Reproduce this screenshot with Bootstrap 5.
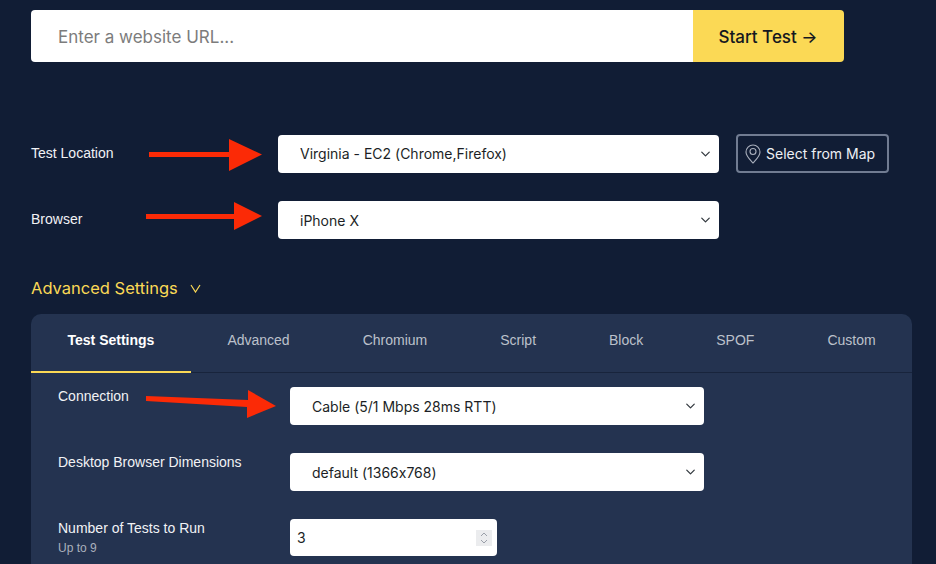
<!DOCTYPE html>
<html lang="en">
<head>
    <meta charset="UTF-8" />
    <title>Start a Test</title>
    <link href="https://cdn.jsdelivr.net/npm/bootstrap@5.3.0/dist/css/bootstrap.min.css" rel="stylesheet" />
    <style>
        html, body { height: 564px; overflow: hidden; }
        body { background: #111d35; font-family: "Liberation Sans", Arial, sans-serif; font-size: 14px; color: #f1f2f5; }
        .test-page { padding: 10px 24px 0 31px; }

        .url-bar { width: 813px; height: 52px; }
        .url-bar .form-control { height: 52px; border: 0; padding: 1px 0 0 27px; font-family: Inter, sans-serif; font-size: 17px; border-radius: 4px 0 0 4px; }
        .url-bar .form-control::placeholder { color: #7c7c7c; }
        .start-btn { width: 151px; padding: 3px 1px 0 0; background: #fbd955; border: 0; border-radius: 0 4px 4px 0; color: #14171f; font-family: Inter, sans-serif; font-size: 17px; font-weight: 500; }
        .start-btn:hover { background: #fbd955; color: #14171f; }

        .form-line { display: flex; align-items: center; }
        .form-line > label { width: 247px; flex: none; }
        /* calt off: Inter otherwise turns the x of 1366x768 into a multiplication sign */
        .pick { height: 38px; width: 441px; padding: 0 30px 0 22px; border: 0; border-radius: 4px; font-family: Inter, sans-serif; font-size: 14px; font-feature-settings: "calt" 0; color: #1c1f26; background-position: right 7px center; background-size: 13px 10px; }
        .location-line { margin-top: 72px; }
        .browser-line { margin-top: 28px; }
        .browser-line > label { padding-bottom: 2px; }

        .map-btn { display: flex; align-items: center; gap: 5px; height: 39px; width: 153px; margin-left: 17px; padding: 0 0 0 7px; border: 2px solid #717c92; border-radius: 4px; background: transparent; color: #eef0f4; font-family: Inter, sans-serif; font-size: 14px; white-space: nowrap; }

        .adv-toggle { display: flex; align-items: center; gap: 12px; margin-top: 37px; color: #fbd955; font-family: Inter, sans-serif; font-size: 16.500px; line-height: 24px; }

        .settings-panel { margin-top: 14px; width: 881px; height: 250px; overflow: hidden; background: #243350; border-radius: 10px 10px 0 0; }
        .panel-tabs { height: 59px; border-bottom: 1px solid #18243c; flex-wrap: nowrap; }
        .panel-tabs .nav-item { flex: none; }
        .panel-tabs .nav-link { height: 59px; padding: 0 36.500px 7px; display: flex; align-items: center; color: #bcc1cb; font-size: 14px; white-space: nowrap; }
        .panel-tabs .nav-link.active { padding-bottom: 5px; color: #fff; font-weight: 700; border-bottom: 2px solid #fbd955; }

        .panel-body { padding: 14px 0 0 27px; }
        .panel-body .form-line { align-items: flex-start; margin-bottom: 28px; }
        .panel-body .form-line > label { width: 232px; line-height: 18px; }
        .panel-body .pick { width: 414px; }
        .hint-text { display: block; margin-top: 2px; font-size: 12px; color: #aab0bc; }
        /* spinner drawn as a background so it keeps the grey box and thin chevrons */
        .runs-input { width: 207px; height: 37px; padding: 0 4px 1px 7px; border: 0; border-radius: 4px; font-family: Inter, sans-serif; font-size: 14px; color: #1c1f26; appearance: textfield;
            background: #fff url("data:image/svg+xml,%3csvg xmlns='http://www.w3.org/2000/svg' width='16' height='16' viewBox='0 0 16 16'%3e%3crect width='16' height='16' fill='%23ebecee'/%3e%3cpath d='M5 6 L8 3 L11 6 M5 10 L8 13 L11 10' fill='none' stroke='%239a9fa9' stroke-width='1'/%3e%3c/svg%3e") no-repeat right 5px center; }
        .runs-input::-webkit-inner-spin-button { display: none; }

        .callouts { position: absolute; left: 0; top: 0; pointer-events: none; }
    </style>
</head>
<body>

<div class="test-page">
    <!-- URL bar -->
    <div class="input-group url-bar">
        <input type="text" class="form-control" placeholder="Enter a website URL..." />
        <button class="btn start-btn" type="button">Start Test →</button>
    </div>

    <!-- Location and browser -->
    <div class="form-line location-line">
        <label>Test Location</label>
        <select class="form-select pick"><option>Virginia - EC2 (Chrome,Firefox)</option></select>
        <button class="map-btn" type="button">
            <svg width="16" height="20" viewBox="0 0 16 20" fill="none" stroke="#aab0bd" stroke-width="1.1">
                <path d="M8 19 C6 16.500 1 12.500 1 8 a7 7 0 0 1 14 0 C15 12.500 10 16.500 8 19 Z" />
                <circle cx="8" cy="7.500" r="3" />
            </svg>
            Select from Map
        </button>
    </div>
    <div class="form-line browser-line">
        <label>Browser</label>
        <select class="form-select pick"><option>iPhone X</option></select>
    </div>

    <!-- Advanced settings -->
    <div class="adv-toggle">
        Advanced Settings
        <svg width="11" height="9" viewBox="0 0 11 9" fill="none" stroke="#fbd955" stroke-width="1.200"><path d="M1 1 L5.500 8 L10 1" /></svg>
    </div>

    <div class="settings-panel">
        <ul class="nav panel-tabs">
            <li class="nav-item"><a class="nav-link active" href="#">Test Settings</a></li>
            <li class="nav-item"><a class="nav-link" href="#">Advanced</a></li>
            <li class="nav-item"><a class="nav-link" href="#">Chromium</a></li>
            <li class="nav-item"><a class="nav-link" href="#">Script</a></li>
            <li class="nav-item"><a class="nav-link" href="#">Block</a></li>
            <li class="nav-item"><a class="nav-link" href="#">SPOF</a></li>
            <li class="nav-item"><a class="nav-link" href="#">Custom</a></li>
        </ul>
        <div class="panel-body">
            <div class="form-line">
                <label>Connection</label>
                <select class="form-select pick"><option>Cable (5/1 Mbps 28ms RTT)</option></select>
            </div>
            <div class="form-line">
                <label>Desktop Browser Dimensions</label>
                <select class="form-select pick"><option>default (1366x768)</option></select>
            </div>
            <div class="form-line">
                <label>Number of Tests to Run <small class="hint-text">Up to 9</small></label>
                <input type="number" class="form-control runs-input" value="3" />
            </div>
        </div>
    </div>
</div>

<!-- Red annotation arrows drawn over the form -->
<svg class="callouts" width="936" height="564" fill="#fb2a06">
    <polygon points="149,152 229,152 229,139 262,154.500 229,171 229,157 149,157" />
    <polygon points="146,214 234,214 234,202 262,216 234,230 234,219 146,219" />
    <polygon points="146,396 248,400 248,390 276,406 247,418 247,407 146,401" />
</svg>

<script src="https://cdn.jsdelivr.net/npm/bootstrap@5.3.0/dist/js/bootstrap.bundle.min.js"></script>
</body>
</html>
